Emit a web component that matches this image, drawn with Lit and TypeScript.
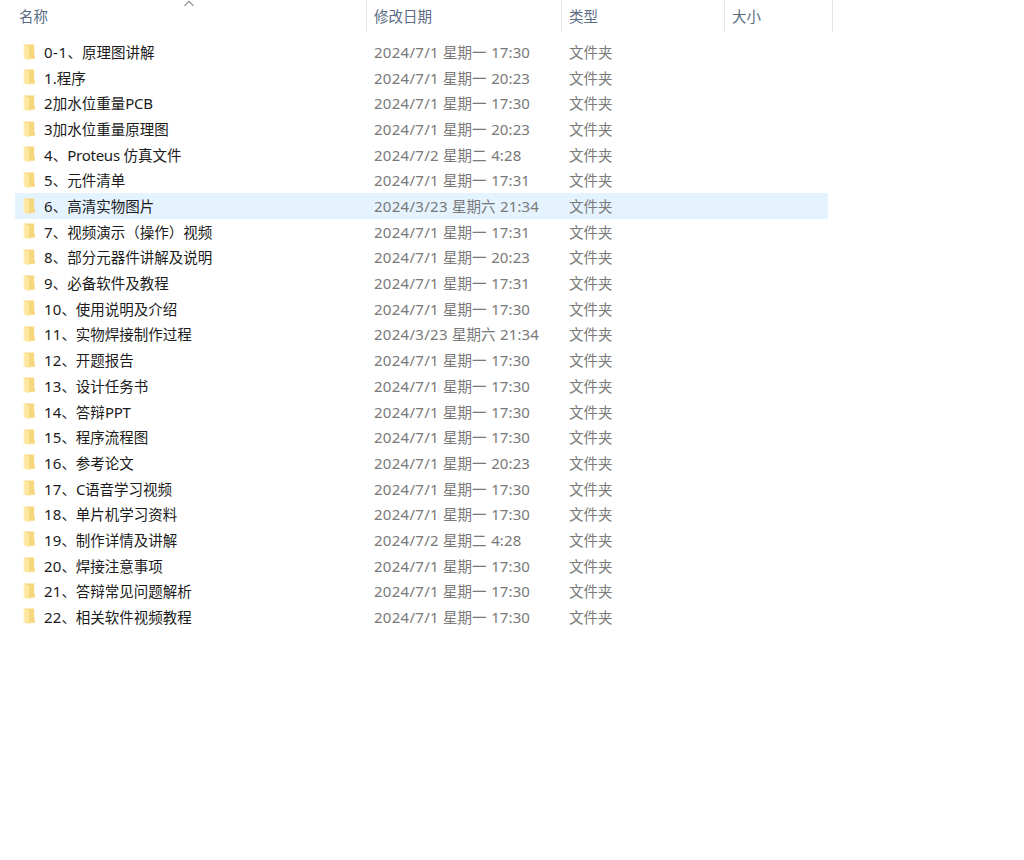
import { LitElement, html, css, svg } from "lit";
import { customElement } from "lit/decorators.js";

interface Entry { name: string; date: string; active?: boolean; }

const D1 = "2024/7/1 星期一 ";
const entries: Entry[] = [
  { name: "0-1、原理图讲解", date: D1 + "17:30" },
  { name: "1.程序", date: D1 + "20:23" },
  { name: "2加水位重量PCB", date: D1 + "17:30" },
  { name: "3加水位重量原理图", date: D1 + "20:23" },
  { name: "4、Proteus 仿真文件", date: "2024/7/2 星期二 4:28" },
  { name: "5、元件清单", date: D1 + "17:31" },
  { name: "6、高清实物图片", date: "2024/3/23 星期六 21:34", active: true },
  { name: "7、视频演示（操作）视频", date: D1 + "17:31" },
  { name: "8、部分元器件讲解及说明", date: D1 + "20:23" },
  { name: "9、必备软件及教程", date: D1 + "17:31" },
  { name: "10、使用说明及介绍", date: D1 + "17:30" },
  { name: "11、实物焊接制作过程", date: "2024/3/23 星期六 21:34" },
  { name: "12、开题报告", date: D1 + "17:30" },
  { name: "13、设计任务书", date: D1 + "17:30" },
  { name: "14、答辩PPT", date: D1 + "17:30" },
  { name: "15、程序流程图", date: D1 + "17:30" },
  { name: "16、参考论文", date: D1 + "20:23" },
  { name: "17、C语音学习视频", date: D1 + "17:30" },
  { name: "18、单片机学习资料", date: D1 + "17:30" },
  { name: "19、制作详情及讲解", date: "2024/7/2 星期二 4:28" },
  { name: "20、焊接注意事项", date: D1 + "17:30" },
  { name: "21、答辩常见问题解析", date: D1 + "17:30" },
  { name: "22、相关软件视频教程", date: D1 + "17:30" },
];

const runClass = (run: string) =>
  /[A-Za-z]/.test(run) ? "word" : /\//.test(run) ? "date" : /-/.test(run) ? "range" : "";

// Latin runs are set slightly larger than the Chinese ones, each kind with its own tracking.
const runs = (text: string) =>
  (text.match(/[\x20-\x7e]+|[^\x20-\x7e]+/g) ?? []).map((run) =>
    /^[\x20-\x7e]/.test(run) ? html`<span class="latin ${runClass(run)}">${run}</span>` : run
  );

const folder = svg`
  <path d="M1 .5H11.2V10.6L11.9 11.2V14.7H5.5L1 14Z" fill="#f7d77d"/>
  <path d="M.5 .7H2.2V14.8L.5 14.2Z" fill="#ffeeb8"/>
  <path d="M1.8 1L6 2.6Q6.6 2.9 6.6 3.6V15.9L1.8 14.7Z" fill="#ffe7a0"/>
  <path d="M6.1 2.8Q6.7 3 6.7 3.7V15.9L6.1 15.7Z" fill="#f5d274"/>`;

@customElement("app-root")
export class AppRoot extends LitElement {
  static styles = css`
    :host {
      display: block;
      width: 1024px;
      height: 860px;
      overflow: hidden;
      background: #fff;
      color: #1b1b1b;
      font: 14.5px/25.68px "Noto Sans CJK SC", sans-serif;
    }
    .head, .row {
      display: grid;
      grid-template-columns: 351px 195px 163px 108px;
      margin-left: 15px;
      width: 813px;
    }
    .cell { white-space: pre; }
    .head {
      grid-template-columns: 352px 195px 163px 108px;
      height: 32px;
      width: 818px;
      color: #5a6c84;
      position: relative;
    }
    .head .cell { border-right: 1px solid #e5e5e5; padding: 3px 0 0 7px; height: 29px; }
    .head .cell:first-child { padding-left: 4px; }
    .sort { position: absolute; left: 168px; top: 0; width: 12px; height: 7px; }
    .list { padding-top: 7.1px; }
    .row { height: 25.68px; color: #797979; }
    .row.active { background: #e5f3ff; }
    .row .cell { padding-left: 8px; }
    .row .name { display: flex; color: #1b1b1b; padding-left: 7.5px; }
    .icon { width: 13px; height: 17px; margin: 4.5px 8.5px 0 0; flex: none; }
    .latin {
      font-family: "Noto Sans", sans-serif;
      font-size: 15px;
      line-height: 1;
      letter-spacing: 0.1px;
      word-spacing: 0.6px;
    }
    .latin.word { letter-spacing: -0.25px; word-spacing: 0; }
    .latin.date { letter-spacing: 0.28px; word-spacing: 0; }
    .latin.range { letter-spacing: 0.5px; }
  `;

  render() {
    return html`
      <div class="head">
        <div class="cell">名称</div>
        <div class="cell">修改日期</div>
        <div class="cell">类型</div>
        <div class="cell">大小</div>
        <svg class="sort" viewBox="0 0 12 7"><path d="M1.5 5.8L6 1.3L10.5 5.8" fill="none" stroke="#858585" stroke-width="1.1"/></svg>
      </div>
      <div class="list">
        ${entries.map((e) => html`
          <div class="row ${e.active ? "active" : ""}">
            <div class="cell name"><svg class="icon" viewBox="0 0 13 17">${folder}</svg><span>${runs(e.name)}</span></div>
            <div class="cell">${runs(e.date)}</div>
            <div class="cell">文件夹</div>
          </div>`)}
      </div>`;
  }
}
